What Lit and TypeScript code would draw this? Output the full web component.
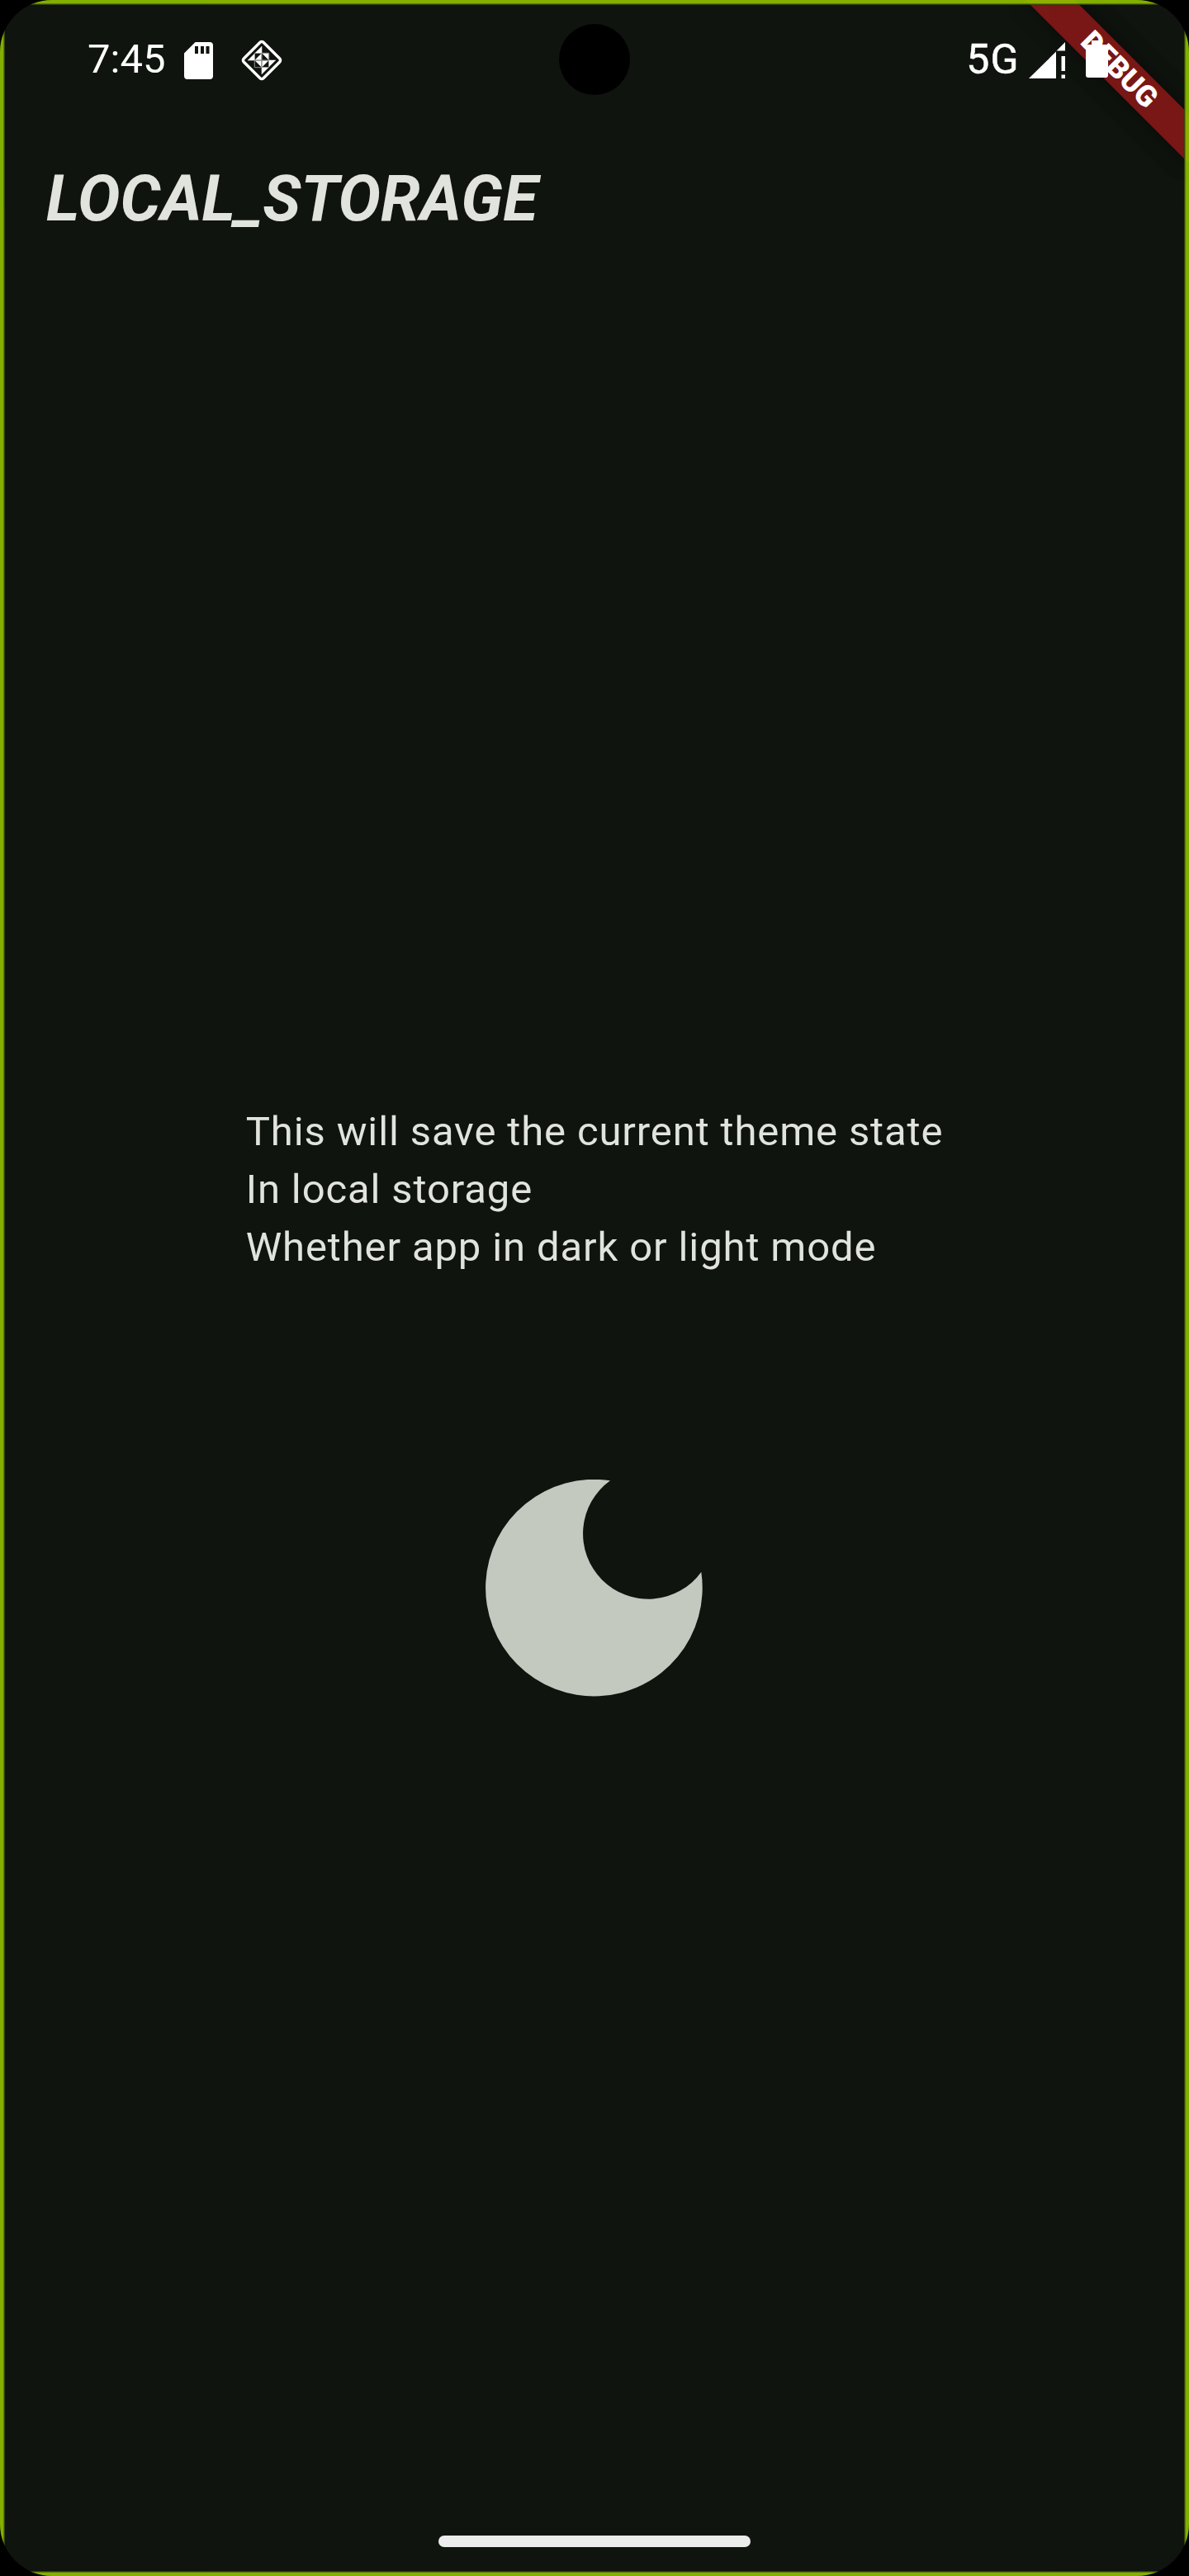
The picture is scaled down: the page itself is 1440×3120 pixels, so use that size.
import { LitElement, html, css } from "lit";
import { customElement } from "lit/decorators.js";

const sdCard = html`<svg class="sd" viewBox="0 0 35 45" width="35" height="45">
  <path fill="#fff" fill-rule="evenodd" d="M13.500 0H31a4 4 0 0 1 4 4v37a4 4 0 0 1-4 4H4a4 4 0 0 1-4-4V13.500zM13 5v9h4V5zM20 5v9h4V5zM26.500 5v9h4V5z"/>
</svg>`;

const diamond = html`<svg class="diamond" viewBox="-25 -25 50 50" width="50" height="50">
  <rect x="-16.800" y="-16.800" width="33.600" height="33.600" rx="2.800" transform="rotate(45)" fill="none" stroke="#fff" stroke-width="3.400"/>
  <path fill="none" stroke="#8f918f" stroke-width="1" d="M-8.700-8.700H8.700V8.700H-8.700zM0-17V17M-17 0H17"/>
  <path fill="#fff" d="M0-17V-8.700H-8.300zM-17 0L-8.700-8.300V0zM17 0L8.700 8.300V0zM0 17V8.700H8.300zM-.5-8.200V-.5H-8.200zM.5-8.200H8.200V-.5zM-8.200.5H-.5V8.200zM.5.5H8.200L.5 8.200z"/>
</svg>`;

const signal = html`<svg class="signal" viewBox="0 0 46 45" width="46" height="45">
  <path fill="#fff" d="M44 0v10.500H33.500zM33 11.500V44H0zM39.500 17H44v18h-4.500zM39.500 39.500H44V44h-4.500z"/>
</svg>`;

@customElement("app-root")
export class AppRoot extends LitElement {
  static styles = css`
    :host {
      display: block;
      width: 1440px;
      height: 3120px;
      background: #000;
      font-family: Roboto, "Liberation Sans", sans-serif;
      color: #e1e4dc;
    }
    .screen {
      position: relative;
      box-sizing: border-box;
      width: 1440px;
      height: 3120px;
      overflow: hidden;
      border-radius: 63px;
      background: #10140f;
      display: flex;
      flex-direction: column;
    }
    .frame {
      position: absolute;
      inset: 0;
      opacity: 0.9;
      box-shadow: inset 0 0 0 4px #91c100, inset 0 0 0 5px #658604, inset 0 0 0 6px #37490a;
    }
    .ribbon-area {
      position: absolute;
      top: 0;
      right: 0;
      width: 280px;
      height: 280px;
      overflow: hidden;
    }
    .ribbon {
      position: absolute;
      left: 140px;
      top: 98px;
      width: 280px;
      height: 42px;
      transform-origin: 140px -98px;
      transform: rotate(45deg);
      background: #791817;
      box-shadow: 0 0 21px rgba(0, 0, 0, 0.5);
      color: #fff;
      font-size: 35.700px;
      font-weight: 900;
      line-height: 42px;
      text-align: center;
    }
    .status {
      position: relative;
      display: flex;
      align-items: flex-start;
      height: 145px;
      color: #fff;
      font-size: 49px;
      line-height: 58px;
    }
    .clock { margin: 43px 0 0 106px; width: 96px; white-space: nowrap; }
    .sd { margin: 51px 0 0 21px; }
    .diamond { margin: 48px 0 0 33.500px; }
    .camera {
      position: absolute;
      left: 677px;
      top: 29px;
      width: 86px;
      height: 86px;
      border-radius: 50%;
      background: #000;
    }
    .network {
      margin: 43px 0 0 auto;
      font-size: 50px;
      letter-spacing: 1px;
      -webkit-text-stroke: 0.500px #fff;
    }
    .signal { margin: 51px 0 0 11.500px; }
    .battery {
      margin: 54px 98px 0 23px;
      width: 27px;
      height: 40px;
      border-radius: 3px;
      background: #fff;
      display: flex;
      justify-content: center;
    }
    .cap { width: 13px; height: 5px; margin-top: -5px; background: #fff; }
    .title {
      margin: 0;
      height: 196px;
      padding-left: 56px;
      font-size: 77px;
      line-height: 98px;
      padding-top: 47px;
      box-sizing: border-box;
      font-weight: 700;
      font-style: italic;
    }
    .body {
      flex: 1;
      display: flex;
      flex-direction: column;
      align-items: center;
      padding-top: 995px;
    }
    .copy {
      margin: 0;
      font-size: 49px;
      line-height: 70px;
      letter-spacing: 0.875px;
      white-space: pre;
    }
    .moon { display: block; margin-top: 246px; }
    .handle {
      align-self: center;
      width: 378px;
      height: 14px;
      border-radius: 7px;
      background: #ececec;
      margin-bottom: 35px;
    }
  `;

  render() {
    return html`
      <div class="screen">
        <div class="ribbon-area"><div class="ribbon">DEBUG</div></div>
        <div class="status">
          <span class="clock">7:45</span>
          ${sdCard}${diamond}
          <div class="camera"></div>
          <span class="network">5G</span>
          ${signal}
          <div class="battery"><div class="cap"></div></div>
        </div>
        <h1 class="title">LOCAL_STORAGE</h1>
        <div class="body">
          <p class="copy">${"This will save the current theme state\nIn local storage\nWhether app in dark or light mode"}</p>
          <svg class="moon" viewBox="0 0 264 264" width="264" height="264">
            <path fill="#c3c9be" d="M151 1.300A131.300 131.300 0 1 0 261.300 112A79.150 79.150 0 1 1 151 1.300z"/>
          </svg>
        </div>
        <div class="handle"></div>
        <div class="frame"></div>
      </div>
    `;
  }
}
